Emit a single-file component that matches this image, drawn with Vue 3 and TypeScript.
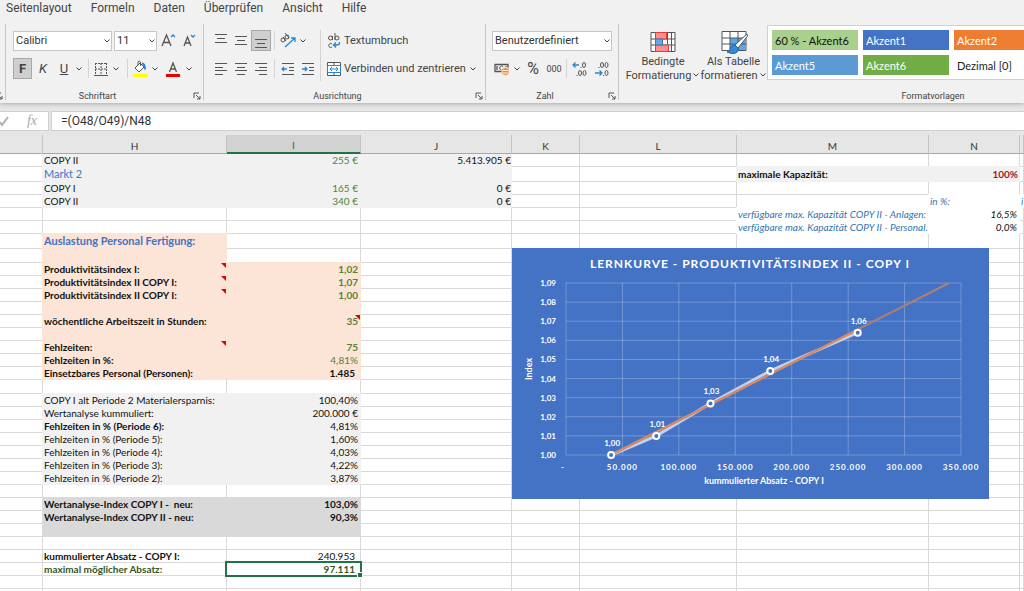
<script setup lang="ts">
import { ref } from 'vue'

type Fill = 'gray' | 'peach' | 'dark' | 'blank'
interface Cell {
  t?: string
  fill?: Fill
  cls?: string
  note?: boolean
}
interface Row {
  h?: 'mid' | 'tall'
  H?: Cell
  I?: Cell
  J?: Cell
  M?: Cell
  N?: Cell
  O?: Cell
}
type Key = 'G' | 'H' | 'I' | 'J' | 'K' | 'L' | 'M' | 'N' | 'O'

const tabs = ['Seitenlayout', 'Formeln', 'Daten', 'Überprüfen', 'Ansicht', 'Hilfe']
const columns: Key[] = ['G', 'H', 'I', 'J', 'K', 'L', 'M', 'N', 'O']
const formula = ref('=(O48/O49)/N48')
const chevron = 'M1.500 2.500L4 5l2.500-2.500'
const launch = 'M1 6V1h5M3 3l4 4M7 4v3H4'

const styles = [
  { name: '60 % - Akzent6', cls: 'light6' },
  { name: 'Akzent1', cls: 'acc1' },
  { name: 'Akzent2', cls: 'acc2' },
  { name: 'Akzent5', cls: 'acc5' },
  { name: 'Akzent6', cls: 'acc6' },
  { name: 'Dezimal [0]', cls: 'plain' },
]

const g = (t = '', cls = ''): Cell => ({ t, cls, fill: 'gray' })
const p = (t = '', cls = '', note = false): Cell => ({ t, cls, note, fill: 'peach' })
const d = (t = '', cls = ''): Cell => ({ t, cls, fill: 'dark' })
const w = (t = '', cls = ''): Cell => ({ t, cls, fill: 'blank' })

const rows: Row[] = [
  { H: g('COPY II'), I: g('255 €', 'num green'), J: g('5.413.905 €', 'num edge') },
  { h: 'tall', H: g('Markt 2', 'blue large'), I: g(), J: g(), M: g('maximale Kapazität:', 'bold'), N: g('100%', 'num near bold red') },
  { H: g('COPY I'), I: g('165 €', 'num green'), J: g('0 €', 'num edge') },
  { H: g('COPY II'), I: g('340 €', 'num green'), J: g('0 €', 'num edge'), N: w('in %:', 'hint'), O: w('i', 'hint') },
  { M: w('verfügbare max. Kapazität COPY II - Anlagen:', 'hint'), N: w('16,5%', 'num italic') },
  { M: w('verfügbare max. Kapazität COPY II - Personal.', 'hint'), N: w('0,0%', 'num italic') },
  { h: 'tall', H: p('Auslastung Personal Fertigung:', 'bold blue large') },
  { h: 'mid', H: p() },
  { H: p('Produktivitätsindex I:', 'bold', true), I: p('1,02', 'num green bold') },
  { H: p('Produktivitätsindex II COPY I:', 'bold', true), I: p('1,07', 'num green bold') },
  { H: p('Produktivitätsindex II COPY I:', 'bold', true), I: p('1,00', 'num green bold') },
  { H: p(), I: p() },
  { H: p('wöchentliche Arbeitszeit in Stunden:', 'bold'), I: p('35', 'num green bold', true) },
  { H: p(), I: p() },
  { H: p('Fehlzeiten:', 'bold', true), I: p('75', 'num green bold') },
  { H: p('Fehlzeiten in %:', 'bold'), I: p('4,81%', 'num green') },
  { H: p('Einsetzbares Personal (Personen):', 'bold'), I: p('1.485', 'num inset bold') },
  { h: 'mid' },
  { H: g('COPY I alt Periode 2 Materialersparnis:'), I: g('100,40%', 'num') },
  { H: g('Wertanalyse kummuliert:'), I: g('200.000 €', 'num') },
  { H: g('Fehlzeiten in % (Periode 6):', 'bold'), I: g('4,81%', 'num') },
  { H: g('Fehlzeiten in % (Periode 5):'), I: g('1,60%', 'num') },
  { H: g('Fehlzeiten in % (Periode 4):'), I: g('4,03%', 'num') },
  { H: g('Fehlzeiten in % (Periode 3):'), I: g('4,22%', 'num') },
  { H: g('Fehlzeiten in % (Periode 2):'), I: g('3,87%', 'num') },
  {},
  { H: d('Wertanalyse-Index COPY I -  neu:', 'bold'), I: d('103,0%', 'num bold') },
  { H: d('Wertanalyse-Index COPY II - neu:', 'bold'), I: d('90,3%', 'num bold') },
  { H: d(), I: d() },
  {},
  { H: { t: 'kummulierter Absatz - COPY I:', cls: 'bold' }, I: { t: '240.953', cls: 'num inset' } },
  { H: { t: 'maximal möglicher Absatz:', cls: 'bold forest' }, I: { t: '97.111', cls: 'num inset bold forest active' } },
  {},
  {},
]

function cellOf(row: Row, key: Key): Cell {
  return (row as Record<string, Cell | undefined>)[key] ?? {}
}
function cellClass(c: Cell): string[] {
  return [c.fill ? 'fill ' + c.fill : '', c.cls ?? '', c.note ? 'note' : '']
}

const plot = { left: 54, right: 449, top: 35, bottom: 207 }
const px = (v: number) => plot.left + (v / 350000) * (plot.right - plot.left)
const py = (v: number) => plot.bottom - ((v - 1) / 0.09) * (plot.bottom - plot.top)
const yTicks = Array.from({ length: 10 }, (_, i) => ({ y: py(1 + i / 100), label: '1,0' + i }))
const xTicks = Array.from({ length: 8 }, (_, i) => ({ x: px(i * 50000), label: i ? i * 50 + '.000' : '-' }))
const points = [
  { v: 40000, i: 1.0, label: '1,00' },
  { v: 80000, i: 1.01, label: '1,01' },
  { v: 128000, i: 1.027, label: '1,03' },
  { v: 181000, i: 1.044, label: '1,04' },
  { v: 258500, i: 1.064, label: '1,06' },
].map((s) => ({ x: px(s.v), y: py(s.i), label: s.label }))
const line = points.map((s) => `${s.x},${s.y}`).join(' ')
</script>

<template>
  <div class="app">
    <header class="ribbon">
      <nav class="tabs">
        <button v-for="t in tabs" :key="t" type="button" class="tab">{{ t }}</button>
      </nav>
      <div class="groups">
        <section class="group stub">
          <button type="button" class="launcher" aria-label="Zwischenablage">
            <svg width="8" height="8" viewBox="0 0 8 8"><path :d="launch" /></svg>
          </button>
        </section>

        <section class="group font">
          <div class="line">
            <span class="combo family">
              <select aria-label="Schriftart"><option>Calibri</option></select>
              <svg class="chev" viewBox="0 0 8 8"><path :d="chevron" /></svg>
            </span>
            <span class="combo size">
              <select aria-label="Schriftgrad"><option>11</option></select>
              <svg class="chev" viewBox="0 0 8 8"><path :d="chevron" /></svg>
            </span>
            <button type="button" class="ico w22" aria-label="Schriftgrad vergrößern">
              <svg width="16" height="18" viewBox="0 0 16 18"><path class="k heavy" d="M2 14L6.500 3L11 14M3.500 10.500h6" /><path class="b heavy" d="M11 5l2-2 2 2" /></svg>
            </button>
            <button type="button" class="ico w20" aria-label="Schriftgrad verkleinern">
              <svg width="16" height="18" viewBox="0 0 16 18"><path class="k heavy" d="M3 14L6.500 5L10 14M4.500 11h4" /><path class="b heavy" d="M10 3l2 2 2-2" /></svg>
            </button>
          </div>
          <div class="line">
            <button type="button" class="ico w19 on glyph strong" aria-label="Fett">F</button>
            <button type="button" class="ico w22 glyph slant" aria-label="Kursiv">K</button>
            <button type="button" class="ico w20 glyph under" aria-label="Unterstrichen">U</button>
            <button type="button" class="ico w10" aria-label="Unterstreichungsart"><svg class="chev" viewBox="0 0 8 8"><path :d="chevron" /></svg></button>
            <i class="bar"></i>
            <button type="button" class="ico w16" aria-label="Rahmen">
              <svg width="14" height="14" viewBox="0 0 14 14"><path class="k" d="M1 1.500h12M1.500 1v11M12.500 1v11M7 1v12M1 7h12" stroke-dasharray="2 1" /><path class="k" d="M0 13.500h14" /></svg>
            </button>
            <button type="button" class="ico w14" aria-label="Rahmenart"><svg class="chev" viewBox="0 0 8 8"><path :d="chevron" /></svg></button>
            <i class="bar"></i>
            <button type="button" class="ico w16" aria-label="Füllfarbe">
              <svg width="16" height="18" viewBox="0 0 16 18"><path fill="#ffff00" d="M1 14h14v3H1z" /><path class="k" fill="#fff" d="M3 8l5-5 4 4-5 5zM6 5V2q1-2 2.500 0v4" /><path class="b thick" d="M10 3.500q3 0 3 6" /></svg>
            </button>
            <button type="button" class="ico w14" aria-label="Füllfarbe wählen"><svg class="chev" viewBox="0 0 8 8"><path :d="chevron" /></svg></button>
            <button type="button" class="ico w22" aria-label="Schriftfarbe">
              <svg width="16" height="18" viewBox="0 0 16 18"><path fill="#e60000" d="M1 14h14v3H1z" /><path class="k heavy" d="M4.500 12L8 3l3.500 9M6 9h4" /></svg>
            </button>
            <button type="button" class="ico w10" aria-label="Schriftfarbe wählen"><svg class="chev" viewBox="0 0 8 8"><path :d="chevron" /></svg></button>
          </div>
          <footer class="caption">Schriftart</footer>
          <button type="button" class="launcher" aria-label="Schriftart öffnen">
            <svg width="8" height="8" viewBox="0 0 8 8"><path :d="launch" /></svg>
          </button>
        </section>

        <section class="group align">
          <div class="cols">
            <div class="stack">
              <div class="line">
                <button type="button" class="ico w20" aria-label="Oben ausrichten"><svg width="14" height="16" viewBox="0 0 14 16"><path class="k" d="M1 1.500h12M3 5.500h8M1 9.500h12" /></svg></button>
                <button type="button" class="ico w20" aria-label="Zentriert ausrichten"><svg width="14" height="16" viewBox="0 0 14 16"><path class="k" d="M1 3.500h12M3 7.500h8M1 11.500h12" /></svg></button>
                <button type="button" class="ico w20 on" aria-label="Unten ausrichten"><svg width="14" height="16" viewBox="0 0 14 16"><path class="k" d="M1 6.500h12M3 10.500h8M1 14.500h12" /></svg></button>
                <i class="bar slim"></i>
                <button type="button" class="ico w20" aria-label="Ausrichtung">
                  <svg width="18" height="16" viewBox="0 0 18 16"><g class="k"><circle cx="4" cy="7" r="2" /><path d="M4 4l3 4" /><circle cx="8" cy="4" r="2" /><path d="M6 0l4 5" /></g><path class="b heavy" d="M6 14L16 5M12 5h4v4" /></svg>
                </button>
                <button type="button" class="ico w10" aria-label="Ausrichtung wählen"><svg class="chev" viewBox="0 0 8 8"><path :d="chevron" /></svg></button>
              </div>
              <div class="line">
                <button type="button" class="ico w20" aria-label="Linksbündig"><svg width="14" height="14" viewBox="0 0 14 14"><path class="k" d="M1 1.500h12M1 5.500h8M1 8.500h12M1 12.500h8" /></svg></button>
                <button type="button" class="ico w20" aria-label="Zentriert"><svg width="14" height="14" viewBox="0 0 14 14"><path class="k" d="M1 1.500h12M3 5.500h8M1 8.500h12M3 12.500h8" /></svg></button>
                <button type="button" class="ico w20" aria-label="Rechtsbündig"><svg width="14" height="14" viewBox="0 0 14 14"><path class="k" d="M1 1.500h12M5 5.500h8M1 8.500h12M5 12.500h8" /></svg></button>
                <i class="bar slim"></i>
                <button type="button" class="ico w20" aria-label="Einzug verkleinern"><svg width="14" height="14" viewBox="0 0 14 14"><path class="k" d="M1 1.500h12M8 5.500h5M8 8.500h5M1 12.500h12" /><path class="b heavy" d="M6 7H1M3 5L1 7l2 2" /></svg></button>
                <button type="button" class="ico w20" aria-label="Einzug vergrößern"><svg width="14" height="14" viewBox="0 0 14 14"><path class="k" d="M1 1.500h12M8 5.500h5M8 8.500h5M1 12.500h12" /><path class="b heavy" d="M1 7h5M4 5l2 2-2 2" /></svg></button>
              </div>
            </div>
            <i class="rule"></i>
            <div class="stack">
              <div class="line">
                <button type="button" class="wide">
                  <svg width="14" height="16" viewBox="0 0 14 16"><g class="k"><circle cx="3.500" cy="5" r="2" /><path d="M5.500 3v4M8 0v7M5 11a2 2 0 1 0 0 3" /><circle cx="10" cy="5" r="2" /></g><path class="b heavy" d="M12.500 9v1q0 2-3 2H7M9 9.500L6.500 12 9 14.500" /></svg>
                  Textumbruch
                </button>
              </div>
              <div class="line">
                <button type="button" class="wide">
                  <svg width="14" height="14" viewBox="0 0 14 14"><path class="k" fill="#fff" d="M.5 .5h13v13H.5zM7 0v3M7 11v3" /><path class="b" fill="#e3f1fc" d="M.5 3.500h13v7H.5zM3 7h8M5 5L3 7l2 2M9 5l2 2-2 2" /></svg>
                  Verbinden und zentrieren
                </button>
                <button type="button" class="ico w14" aria-label="Verbinden wählen"><svg class="chev" viewBox="0 0 8 8"><path :d="chevron" /></svg></button>
              </div>
            </div>
          </div>
          <footer class="caption">Ausrichtung</footer>
          <button type="button" class="launcher" aria-label="Ausrichtung öffnen">
            <svg width="8" height="8" viewBox="0 0 8 8"><path :d="launch" /></svg>
          </button>
        </section>

        <section class="group number">
          <div class="line">
            <span class="combo format">
              <select aria-label="Zahlenformat"><option>Benutzerdefiniert</option></select>
              <svg class="chev" viewBox="0 0 8 8"><path :d="chevron" /></svg>
            </span>
          </div>
          <div class="line">
            <button type="button" class="ico w20" aria-label="Buchhaltungsformat">
              <svg width="16" height="14" viewBox="0 0 16 14"><path class="k heavy" d="M1 2.500h13v7H1zM3 4v4M12 4v1" /><path class="k" d="M9 4.500a2 2 0 1 0 0 3" /><path fill="#f0862b" stroke="#f1f1f1" d="M8 6.500q3.500-2 7 0v6q-3.500 2-7 0z" /><path stroke="#fff" fill="none" d="M9 8.500h5M9 11h5" /></svg>
            </button>
            <button type="button" class="ico w10" aria-label="Währung wählen"><svg class="chev" viewBox="0 0 8 8"><path :d="chevron" /></svg></button>
            <button type="button" class="ico w22 percent" aria-label="Prozentformat">%</button>
            <button type="button" class="ico w20 zeros" aria-label="Tausendertrennzeichen">000</button>
            <i class="bar slim"></i>
            <button type="button" class="ico w22" aria-label="Dezimalstelle hinzufügen">
              <svg width="16" height="16" viewBox="0 0 16 16"><path class="b heavy" d="M7 4H1M3.500 1.500L1 4l2.500 2.500" /><g class="k"><ellipse cx="12" cy="4" rx="1.500" ry="2.500" /><ellipse cx="8" cy="12" rx="1.500" ry="2.500" /><ellipse cx="12.500" cy="12" rx="1.500" ry="2.500" /><path d="M9 6v1M5 14v1" /></g></svg>
            </button>
            <button type="button" class="ico w22" aria-label="Dezimalstelle löschen">
              <svg width="16" height="16" viewBox="0 0 16 16"><path class="b heavy" d="M1 12h7M5.500 9.500L8 12l-2.500 2.500" /><g class="k"><ellipse cx="8" cy="4" rx="1.500" ry="2.500" /><ellipse cx="12.500" cy="4" rx="1.500" ry="2.500" /><ellipse cx="12.500" cy="12" rx="1.500" ry="2.500" /><path d="M5 6v1M9.500 14v1" /></g></svg>
            </button>
          </div>
          <footer class="caption">Zahl</footer>
          <button type="button" class="launcher" aria-label="Zahl öffnen">
            <svg width="8" height="8" viewBox="0 0 8 8"><path :d="launch" /></svg>
          </button>
        </section>

        <section class="group looks">
          <div class="cols">
            <button type="button" class="big cond">
              <svg width="26" height="22" viewBox="0 0 26 22"><path class="k" fill="#fff" d="M1 1.500h24v19H1zM5.500 1v19M17.500 1v19M21.500 1v19M1 8h24M1 14h24" /><path fill="#ff8f8f" stroke="#e23b3b" d="M5.500 1.500h11V8h-11zM5.500 14h13v6.500h-13z" /><path fill="#6ba8dc" stroke="#2f76b5" d="M5.500 8h7v6h-7z" /></svg>
              <span>Bedingte</span>
              <span>Formatierung <svg class="chev" viewBox="0 0 8 8"><path :d="chevron" /></svg></span>
            </button>
            <button type="button" class="big tbl">
              <svg width="28" height="24" viewBox="0 0 28 24"><path class="k" fill="#fff" d="M2 1.500h24v19H2z" /><path fill="#5ba7e2" d="M10 8h16v12H10z" /><path class="k" d="M2 8h24M2 14h24M10 1v19M18 1v19" /><path fill="#fff" stroke="#555" d="M27 4L15 15l3 3L27.500 6z" /><path fill="#2f8bd8" stroke="#1c69ad" d="M15 15q-4 0-5 5-1 2-3 2 7 3 10 0 2-2 1-4z" /></svg>
              <span>Als Tabelle</span>
              <span>formatieren <svg class="chev" viewBox="0 0 8 8"><path :d="chevron" /></svg></span>
            </button>
            <div class="gallery">
              <button v-for="s in styles" :key="s.name" type="button" :class="['swatch', s.cls]">{{ s.name }}</button>
            </div>
          </div>
          <footer class="caption">Formatvorlagen</footer>
        </section>
      </div>
    </header>

    <div class="formula">
      <div class="tools">
        <button type="button" class="ico" aria-label="Eingeben"><svg width="12" height="12" viewBox="0 0 12 12"><path class="tick" d="M2 7l2 3 6-8" /></svg></button>
        <button type="button" class="fx" aria-label="Funktion einfügen">fx</button>
      </div>
      <input v-model="formula" class="entry" type="text" aria-label="Bearbeitungsleiste" />
    </div>

    <main class="sheet">
      <table>
        <colgroup>
          <col v-for="c in columns" :key="c" :class="'c' + c" />
        </colgroup>
        <thead>
          <tr>
            <th v-for="c in columns" :key="c" scope="col" :class="{ sel: c === 'I' }">{{ c === 'G' || c === 'O' ? '' : c }}</th>
          </tr>
        </thead>
        <tbody>
          <tr v-for="(r, i) in rows" :key="i" :class="r.h">
            <td v-for="c in columns" :key="c" :class="cellClass(cellOf(r, c))"><div class="txt">{{ cellOf(r, c).t }}</div></td>
          </tr>
        </tbody>
      </table>

      <figure class="chart">
        <svg viewBox="0 0 477 251" role="img" aria-label="Lernkurve">
          <text class="title" x="238" y="20">LERNKURVE - PRODUKTIVITÄTSINDEX II - COPY I</text>
          <g class="grid">
            <line v-for="t in yTicks" :key="'y' + t.label" :x1="plot.left" :x2="plot.right" :y1="t.y" :y2="t.y" />
            <line v-for="t in xTicks" :key="'x' + t.label" :x1="t.x" :x2="t.x" :y1="plot.top" :y2="plot.bottom" />
          </g>
          <text v-for="t in yTicks" :key="t.label" class="tick-y" x="44" :y="t.y + 3">{{ t.label }}</text>
          <text v-for="t in xTicks" :key="t.label" class="tick-x" :x="t.label === '-' ? 51 : t.x" y="222">{{ t.label }}</text>
          <polyline class="series" :points="line" />
          <line class="trend-thin" x1="99" y1="207" x2="437" y2="35" />
          <line class="trend" x1="99" y1="207" x2="345" y2="82" />
          <g v-for="s in points" :key="s.label">
            <circle class="dot" :cx="s.x" :cy="s.y" r="3" />
            <text class="lbl" :x="s.x + 1" :y="s.y - 9">{{ s.label }}</text>
          </g>
          <text class="axis" x="252" y="236">kummulierter Absatz - COPY I</text>
          <text class="axis" transform="translate(20 121) rotate(-90)">Index</text>
        </svg>
      </figure>
    </main>
  </div>
</template>

<style>
html,
body {
  margin: 0;
  overflow: hidden;
}
</style>

<style scoped>
.app {
  height: 100vh;
  display: flex;
  flex-direction: column;
  overflow: hidden;
  background: #e6e6e6;
  color: #444;
  font-family: Roboto, 'Open Sans', sans-serif;
  font-size: 11px;
}
button {
  margin: 0;
  padding: 0;
  border: 0;
  background: none;
  font: inherit;
  color: inherit;
}
svg {
  display: block;
  flex: none;
}
.k,
.b {
  fill: none;
  stroke: #555;
  stroke-width: 1;
}
.k[fill='#fff'] {
  fill: #fff;
}
.b {
  stroke: #2586d8;
}
.heavy {
  stroke-width: 1.3;
}
.thick {
  stroke-width: 2;
}
.chev {
  width: 8px;
  height: 8px;
  fill: none;
  stroke: #444;
}

.ribbon {
  flex: none;
  background: #f1f1f1;
  box-shadow: 0 1px 4px #aaa;
  padding-bottom: 3px;
  position: relative;
}
.tabs {
  display: flex;
  gap: 19px;
  height: 24px;
  padding-left: 6px;
}
.tab {
  height: 16px;
  line-height: 16px;
  font-size: 12px;
}
.groups {
  display: flex;
  height: 76px;
}
.group {
  position: relative;
  box-sizing: border-box;
  flex: none;
  border-right: 1px solid #c8c8c8;
  display: flex;
  flex-direction: column;
  gap: 7px;
  padding-top: 6px;
}
.stub {
  width: 6px;
}
.font {
  width: 198px;
  padding-left: 7px;
}
.align {
  width: 282px;
  padding-left: 7px;
}
.number {
  width: 133px;
  padding-left: 6px;
}
.looks {
  width: 628px;
  padding-left: 7px;
  border: 0;
}
.caption {
  position: absolute;
  left: 0;
  right: 0;
  bottom: -3px;
  height: 14px;
  line-height: 14px;
  font-size: 9px;
  text-align: center;
}
.font .caption,
.align .caption,
.number .caption {
  right: 14px;
}
.launcher {
  position: absolute;
  right: 2px;
  bottom: 0;
}
.launcher svg {
  fill: none;
  stroke: #555;
}
.line {
  display: flex;
  align-items: center;
  height: 21px;
}
.cols {
  display: flex;
  align-items: flex-start;
}
.stack {
  display: flex;
  flex-direction: column;
  gap: 7px;
}
.combo {
  position: relative;
  display: block;
}
.combo select {
  appearance: none;
  box-sizing: border-box;
  width: 100%;
  height: 20px;
  padding: 0 0 0 2px;
  border: 1px solid #c6c6c6;
  border-radius: 0;
  background: #fff;
  color: #333;
  font: inherit;
  display: block;
}
.combo .chev {
  position: absolute;
  right: 1px;
  top: 6px;
  pointer-events: none;
}
.family {
  width: 99px;
  margin-right: 2px;
}
.size {
  width: 43px;
}
.format {
  width: 120px;
}
.ico {
  display: flex;
  align-items: center;
  justify-content: center;
  height: 21px;
  box-sizing: border-box;
  flex: none;
}
.w10 {
  width: 10px;
}
.w14 {
  width: 14px;
}
.w16 {
  width: 16px;
}
.w19 {
  width: 19px;
}
.w20 {
  width: 20px;
}
.w22 {
  width: 22px;
}
.on {
  background: #cfcfcf;
  border: 1px solid #a8a8a8;
}
.glyph {
  font-size: 13px;
}
.strong {
  font-weight: 700;
}
.slant {
  font-style: italic;
}
.under {
  text-decoration: underline;
}
.percent {
  font-size: 16px;
}
.zeros {
  font-size: 9px;
}
.bar {
  width: 1px;
  height: 19px;
  margin: 0 4px;
  background: #d4d4d4;
}
.bar.slim {
  margin: 0 2px;
}
.align .bar.slim {
  margin: 0 3px;
}
.rule {
  width: 1px;
  height: 51px;
  margin: 0 6px 0 2px;
  background: #d4d4d4;
}
.align .stack:first-child {
  width: 107px;
}
.wide {
  display: flex;
  align-items: center;
  gap: 3px;
  white-space: nowrap;
}
.big {
  display: flex;
  flex-direction: column;
  align-items: center;
  width: 74px;
  white-space: nowrap;
}
.big.tbl {
  width: 67px;
}
.big > svg {
  height: 24px;
}
.big span {
  display: flex;
  align-items: center;
  gap: 1px;
  height: 14px;
}
.gallery {
  display: grid;
  grid-template-columns: repeat(3, 86px);
  gap: 5px;
  flex: 1;
  margin-top: -5px;
  padding: 4px;
  border: 1px solid #d0d0d0;
  background: #fff;
}
.swatch {
  height: 20px;
  padding-left: 3px;
  text-align: left;
  font-family: Lato, sans-serif;
  font-size: 11px;
  color: #fff;
  white-space: nowrap;
}
.light6 {
  background: #a9d08e;
  color: #111;
}
.acc1 {
  background: #4472c4;
}
.acc2 {
  background: #ed7d31;
}
.acc5 {
  background: #5b9bd5;
}
.acc6 {
  background: #70ad47;
}
.plain {
  background: #fff;
  color: #222;
}

.formula {
  flex: none;
  display: flex;
  gap: 2px;
  height: 20px;
  margin: 8px 0 4px;
}
.tools {
  display: flex;
  align-items: center;
  width: 48px;
  border: 1px solid #d0d0d0;
  border-left: 0;
  background: #fff;
}
.tools .ico {
  width: 8px;
}
.tick {
  fill: none;
  stroke: #b0b0b0;
  stroke-width: 2;
}
.fx {
  flex: 1;
  padding-left: 8px;
  font-family: 'Liberation Serif', serif;
  font-style: italic;
  font-size: 14px;
  color: #aaa;
}
.entry {
  flex: 1;
  min-width: 0;
  padding: 0 0 0 9px;
  border: 1px solid #d0d0d0;
  border-right: 0;
  background: #fff;
  color: #333;
  font: inherit;
  font-size: 12px;
}

.sheet {
  position: relative;
  flex: 1;
  min-height: 0;
  overflow: hidden;
  background: #fff;
  font-family: Lato, sans-serif;
  font-size: 10px;
  color: #111;
}
table {
  width: 100%;
  table-layout: fixed;
  border-spacing: 0;
}
.cG {
  width: 43px;
}
.cH {
  width: 184px;
}
.cI {
  width: 134px;
}
.cJ {
  width: 151px;
}
.cK {
  width: 68px;
}
.cL {
  width: 157px;
}
.cM {
  width: 192px;
}
.cN {
  width: 91px;
}
th {
  position: relative;
  z-index: 1;
  box-sizing: border-box;
  height: 19px;
  padding: 4px 0 0;
  line-height: 13px;
  font-weight: 400;
  color: #333;
  background: #e6e6e6;
  border-right: 1px solid #c4c4c4;
  border-bottom: 1px solid #a8a8a8;
}
th.sel {
  background: #d2d2d2;
  color: #217346;
  border-bottom: 2px solid #217346;
}
td {
  position: relative;
  box-sizing: border-box;
  height: 13px;
  padding: 0 2px 0 1px;
  line-height: 12px;
  border-right: 1px solid #d9d9d9;
  border-bottom: 1px solid #d9d9d9;
}
.mid td {
  height: 14px;
}
.tall td {
  height: 15px;
}
.txt {
  overflow: hidden;
  white-space: pre;
  height: 12px;
}
.tall .txt {
  height: 14px;
  line-height: 14px;
}
.fill {
  --f: #fff;
  background: var(--f);
  border-color: transparent;
  box-shadow: -1px 0 var(--f), 0 -1px var(--f), -1px -1px var(--f);
}
.gray {
  --f: #f1f1f1;
}
.peach {
  --f: #fce4d6;
}
.dark {
  --f: #d9d9d9;
}
.num {
  text-align: right;
}
.edge {
  padding-right: 0;
}
.near {
  padding-right: 1px;
}
.inset {
  padding-right: 5px;
}
.bold {
  font-weight: 700;
}
.italic {
  font-style: italic;
}
.large {
  font-size: 11px;
}
.green {
  color: #548235;
}
.forest {
  color: #375623;
}
.blue {
  color: #4472c4;
}
.red {
  color: #a31515;
}
.hint {
  padding-right: 0;
  color: #2f75b5;
  font-style: italic;
}
.hint .txt {
  overflow: visible;
}
.note::after {
  content: '';
  position: absolute;
  top: 0;
  right: 0;
  width: 5px;
  height: 5px;
  background: #e60000;
  clip-path: polygon(0 0, 100% 0, 100% 100%);
}
.active::before {
  content: '';
  position: absolute;
  inset: -2px;
  border: 2px solid #217346;
  z-index: 1;
}
.active::after {
  content: '';
  position: absolute;
  right: -3px;
  bottom: -3px;
  width: 4px;
  height: 4px;
  background: #217346;
  border: 1px solid #fff;
  z-index: 2;
}

.chart {
  position: absolute;
  left: 512px;
  top: 113px;
  width: 477px;
  margin: 0;
  background: #4472c4;
}
.chart text {
  fill: #fff;
  text-anchor: middle;
  font-weight: 700;
  font-size: 9px;
}
.chart .title {
  font-size: 12px;
  letter-spacing: 1px;
}
.chart .tick-y {
  text-anchor: end;
  font-size: 8px;
}
.chart .tick-x {
  font-size: 8px;
  letter-spacing: 1px;
}
.chart .lbl {
  font-size: 8px;
}
.grid line {
  stroke: #fff;
  stroke-opacity: 0.25;
}
.series {
  fill: none;
  stroke: #c3d0ee;
  stroke-width: 3;
}
.trend {
  stroke: #d98a62;
  stroke-width: 2;
}
.trend-thin {
  stroke: #a98078;
  stroke-width: 2;
}
.dot {
  fill: #4472c4;
  stroke: #fff;
  stroke-width: 2;
}
</style>
